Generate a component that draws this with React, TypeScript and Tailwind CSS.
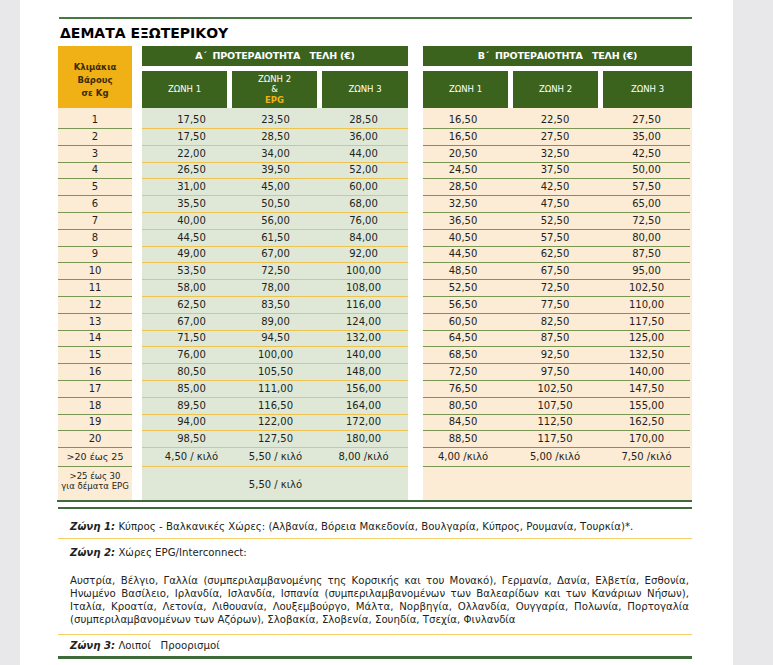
import React from "react";

const rows: [number, string, string, string, string, string, string][] = [
  [1, "17,50", "23,50", "28,50", "16,50", "22,50", "27,50"],
  [2, "17,50", "28,50", "36,00", "16,50", "27,50", "35,00"],
  [3, "22,00", "34,00", "44,00", "20,50", "32,50", "42,50"],
  [4, "26,50", "39,50", "52,00", "24,50", "37,50", "50,00"],
  [5, "31,00", "45,00", "60,00", "28,50", "42,50", "57,50"],
  [6, "35,50", "50,50", "68,00", "32,50", "47,50", "65,00"],
  [7, "40,00", "56,00", "76,00", "36,50", "52,50", "72,50"],
  [8, "44,50", "61,50", "84,00", "40,50", "57,50", "80,00"],
  [9, "49,00", "67,00", "92,00", "44,50", "62,50", "87,50"],
  [10, "53,50", "72,50", "100,00", "48,50", "67,50", "95,00"],
  [11, "58,00", "78,00", "108,00", "52,50", "72,50", "102,50"],
  [12, "62,50", "83,50", "116,00", "56,50", "77,50", "110,00"],
  [13, "67,00", "89,00", "124,00", "60,50", "82,50", "117,50"],
  [14, "71,50", "94,50", "132,00", "64,50", "87,50", "125,00"],
  [15, "76,00", "100,00", "140,00", "68,50", "92,50", "132,50"],
  [16, "80,50", "105,50", "148,00", "72,50", "97,50", "140,00"],
  [17, "85,00", "111,00", "156,00", "76,50", "102,50", "147,50"],
  [18, "89,50", "116,50", "164,00", "80,50", "107,50", "155,00"],
  [19, "94,00", "122,00", "172,00", "84,50", "112,50", "162,50"],
  [20, "98,50", "127,50", "180,00", "88,50", "117,50", "170,00"],
];

const font = { fontFamily: '"DejaVu Sans", sans-serif' };

function Row({
  h,
  top,
  left,
  a,
  b,
  last,
}: {
  h: string;
  top?: boolean;
  left: React.ReactNode;
  a: React.ReactNode;
  b: React.ReactNode;
  last?: boolean;
}) {
  return (
    <div className={`flex ${h}`}>
      <div
        className={`w-[74px] bg-[#fcebd5] flex items-center justify-center ${top ? "pt-[4px]" : ""} ${
          last ? "" : "border-b border-[#7a9652]"
        }`}
      >
        {left}
      </div>
      <div className="w-[10px]" />
      <div
        className={`w-[266px] bg-[#dfe8d6] grid grid-cols-[99px_69px_98px] items-center ${top ? "pt-[4px]" : ""} ${
          last ? "" : "border-b border-[#efc34f]"
        }`}
      >
        {a}
      </div>
      <div className="w-[15px]" />
      <div className="w-[269px] bg-[#fcebd5] flex">
        <div
          className={`w-[267px] grid grid-cols-[80px_104px_79px] items-center ${top ? "pt-[4px]" : ""} ${
            last ? "" : "border-b border-[#7a9652]"
          }`}
        >
          {b}
        </div>
      </div>
    </div>
  );
}

export default function App() {
  return (
    <div className="flex h-[665px] overflow-hidden bg-[#e8e8ea]" style={font}>
      <div className="w-[20px]" />
      <div className="w-[713px] bg-white pl-[38px] text-[#231f20]">
        <div className="pt-[17px]">
          <div className="ml-[1px] h-[2px] w-[633px] bg-[#4a7845]" />
        </div>
        <div className="h-[27px] pt-[6px] pl-[2px] text-[14px] leading-[17px] font-bold text-black">
          ΔΕΜΑΤΑ ΕΞΩΤΕΡΙΚΟΥ
        </div>

        {/* header */}
        <div className="flex h-[62px]">
          <div className="w-[74px] bg-[#efb116] flex flex-col items-center justify-center pt-[6px] text-[8.5px] leading-[13px] font-bold text-[#3b2c0c]">
            <div>Κλιμάκια</div>
            <div>Βάρους</div>
            <div>σε Kg</div>
          </div>
          <div className="w-[10px]" />
          <div className="w-[266px] flex flex-col">
            <div className="h-[20px] bg-[#3b631d] flex items-center justify-center text-white text-[9.5px] font-bold whitespace-pre tracking-[-0.2px]">
              {"Α΄  ΠΡΟΤΕΡΑΙΟΤΗΤΑ   ΤΕΛΗ (€)"}
            </div>
            <div className="mt-[5px] flex gap-[5px] h-[37px] text-white text-[8.5px]">
              <div className="w-[85px] bg-[#3b631d] flex items-center justify-center">ΖΩΝΗ 1</div>
              <div className="w-[85px] bg-[#3b631d] flex flex-col items-center justify-center leading-[10.5px]">
                <div>ΖΩΝΗ 2</div>
                <div>&amp;</div>
                <div className="text-[#efb116] font-bold">EPG</div>
              </div>
              <div className="w-[86px] bg-[#3b631d] flex items-center justify-center">ΖΩΝΗ 3</div>
            </div>
          </div>
          <div className="w-[15px]" />
          <div className="w-[269px] flex flex-col">
            <div className="h-[20px] bg-[#3b631d] flex items-center justify-center text-white text-[9.5px] font-bold whitespace-pre tracking-[-0.2px]">
              {"Β΄  ΠΡΟΤΕΡΑΙΟΤΗΤΑ   ΤΕΛΗ (€)"}
            </div>
            <div className="mt-[5px] flex gap-[5px] h-[37px] text-white text-[8.5px]">
              <div className="w-[85px] bg-[#3b631d] flex items-center justify-center">ΖΩΝΗ 1</div>
              <div className="w-[85px] bg-[#3b631d] flex items-center justify-center">ΖΩΝΗ 2</div>
              <div className="w-[89px] bg-[#3b631d] flex items-center justify-center">ΖΩΝΗ 3</div>
            </div>
          </div>
        </div>

        {/* body */}
        <div className="text-[10px] leading-[12px]">
          {rows.map((r, i) => (
            <Row
              key={r[0]}
              h={i === 0 ? "h-[21px]" : "h-[16.8px]"}
              top={i === 0}
              left={<span>{r[0]}</span>}
              a={
                <>
                  <div className="text-center">{r[1]}</div>
                  <div className="text-center">{r[2]}</div>
                  <div className="text-center pl-[9px]">{r[3]}</div>
                </>
              }
              b={
                <>
                  <div className="text-center">{r[4]}</div>
                  <div className="text-center">{r[5]}</div>
                  <div className="text-center">{r[6]}</div>
                </>
              }
            />
          ))}
          <Row
            h="h-[19px]"
            left={<span className="text-[9.5px]">&gt;20 έως 25</span>}
            a={
              <>
                <div className="text-center">4,50 / κιλό</div>
                <div className="text-center">5,50 / κιλό</div>
                <div className="text-center pl-[9px]">8,00 /κιλό</div>
              </>
            }
            b={
              <>
                <div className="text-center">4,00 /κιλό</div>
                <div className="text-center">5,00 /κιλό</div>
                <div className="text-center">7,50 /κιλό</div>
              </>
            }
          />
          <Row
            h="h-[33px]"
            last
            left={
              <div className="text-center text-[8.5px] leading-[10px] pb-[6px]">
                <div>&gt;25 έως 30</div>
                <div>για δέματα EPG</div>
              </div>
            }
            a={
              <>
                <div />
                <div className="text-center pt-[2px]">5,50 / κιλό</div>
                <div />
              </>
            }
            b={<div />}
          />
        </div>

        {/* double line */}
        <div className="-ml-[1px] w-[635px] h-[2px] bg-[#3f6b3b]" />
        <div className="w-[634px] h-[5px]" />
        <div className="w-[634px] h-[2px] bg-[#3f6b3b]" />

        {/* zones */}
        <div className="w-[634px] text-[10.2px] text-[#231f20]">
          <div className="h-[30px] pt-[11px] leading-[14px] pl-[12px] border-b border-[#f5cf6a] whitespace-nowrap">
            <span className="font-bold italic">Ζώνη 1:</span> Κύπρος - Βαλκανικές Χώρες: (Αλβανία, Βόρεια Μακεδονία, Βουλγαρία, Κύπρος, Ρουμανία, Τουρκία)*.
          </div>
          <div className="pl-[12px] pr-[3px] pt-[7px] pb-[8px] border-b border-[#f5cf6a]">
            <div className="leading-[14px]">
              <span className="font-bold italic">Ζώνη 2:</span> Χώρες EPG/Interconnect:
            </div>
            <div className="mt-[14px] leading-[13px]">
              <div className="text-justify [text-align-last:justify]">
                Αυστρία, Βέλγιο, Γαλλία (συμπεριλαμβανομένης της Κορσικής και του Μονακό), Γερμανία, Δανία, Ελβετία, Εσθονία,
              </div>
              <div className="text-justify [text-align-last:justify]">
                Ηνωμένο Βασίλειο, Ιρλανδία, Ισλανδία, Ισπανία (συμπεριλαμβανομένων των Βαλεαρίδων και των Κανάριων Νήσων),
              </div>
              <div className="text-justify [text-align-last:justify]">
                Ιταλία, Κροατία, Λετονία, Λιθουανία, Λουξεμβούργο, Μάλτα, Νορβηγία, Ολλανδία, Ουγγαρία, Πολωνία, Πορτογαλία
              </div>
              <div>(συμπεριλαμβανομένων των Αζόρων), Σλοβακία, Σλοβενία, Σουηδία, Τσεχία, Φινλανδία</div>
            </div>
          </div>
          <div className="pt-[4px] pb-[3px] pl-[12px] leading-[14px] border-b-[3px] border-[#3f6b3b]">
            <span className="font-bold italic">Ζώνη 3:</span> Λοιποί&nbsp;&nbsp; Προορισμοί
          </div>
        </div>
      </div>
    </div>
  );
}
